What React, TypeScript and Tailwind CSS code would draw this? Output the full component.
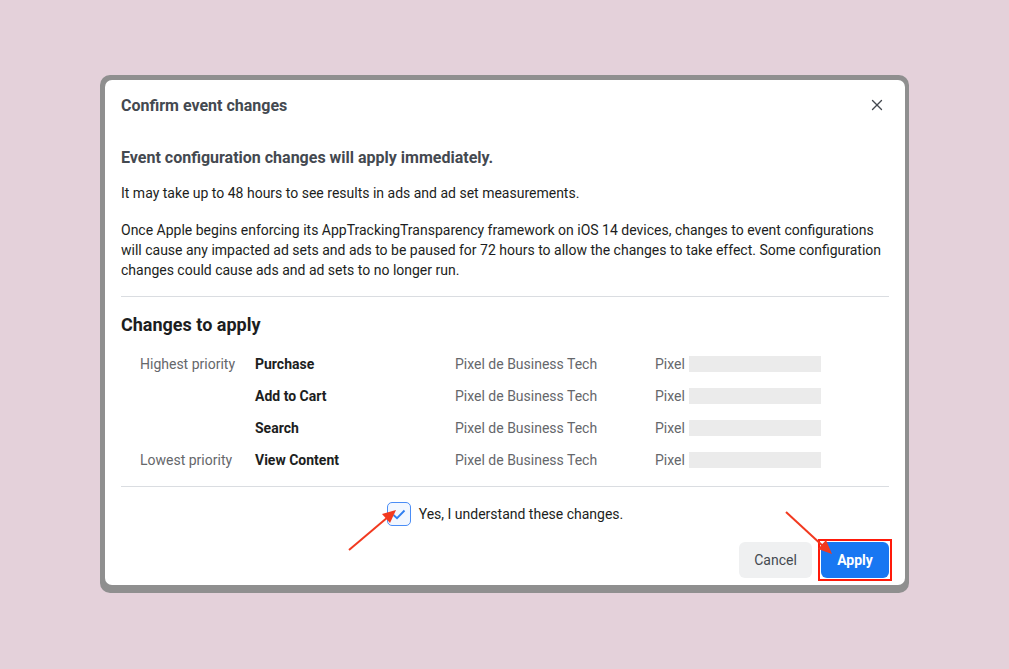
import { X } from "lucide-react";

const rows = [
  { label: "Highest priority", event: "Purchase" },
  { label: "", event: "Add to Cart" },
  { label: "", event: "Search" },
  { label: "Lowest priority", event: "View Content" },
];

function Arrows() {
  return (
    <svg
      className="absolute left-0 top-0 pointer-events-none"
      width="1009"
      height="669"
      viewBox="0 0 1009 669"
    >
      <line x1="349" y1="550" x2="388" y2="517" stroke="#f2391f" strokeWidth="2" />
      <polygon points="396,510 382,514 390,523" fill="#f2391f" />
      <line x1="786" y1="512" x2="824" y2="547" stroke="#f2391f" strokeWidth="2" />
      <polygon points="832,554 826,540 818,549" fill="#f2391f" />
    </svg>
  );
}

export default function App() {
  return (
    <div
      className="relative h-[669px] w-full overflow-hidden bg-[#e4d1da] pt-[75px]"
      style={{ fontFamily: "Roboto, 'Liberation Sans', sans-serif" }}
    >
      <div className="ml-[100px] w-[809px] rounded-[10px] bg-[#8f8f8f] pt-[5px] pl-[5px] pr-[4px] pb-[8px]">
        <div className="relative h-[505px] rounded-[7px] bg-white">
          <header className="flex h-[50px] items-center justify-between pl-4 pr-[19px]">
            <h1 className="mt-px text-[16px] font-bold text-[#444950]">Confirm event changes</h1>
            <X className="h-[18px] w-[18px] text-[#444950]" strokeWidth={1.8} />
          </header>

          <div className="px-4">
            <p className="mt-[18px] text-[16px] font-bold leading-5 text-[#444950]">
              Event configuration changes will apply immediately.
            </p>
            <p className="mt-[15px] text-[14px] leading-5 text-[#1c1e21]">
              It may take up to 48 hours to see results in ads and ad set measurements.
            </p>
            <p className="mt-[17px] text-[14px] leading-5 text-[#1c1e21]">
              Once Apple begins enforcing its AppTrackingTransparency framework on iOS 14 devices, changes to event
              configurations will cause any impacted ad sets and ads to be paused for 72 hours to allow the changes to
              take effect. Some configuration changes could cause ads and ad sets to no longer run.
            </p>
            <div className="mt-4 h-px bg-[#dadde1]" />

            <h2 className="mt-4 text-[18px] font-bold leading-6 text-[#1c1e21]">Changes to apply</h2>
            <div className="mt-[11px] flex flex-col">
              {rows.map((r) => (
                <div key={r.event} className="flex h-8 items-center text-[14px]">
                  <span className="w-[134px] pl-[19px] text-[#65676b]">{r.label}</span>
                  <span className="w-[200px] font-bold text-[#1c1e21]">{r.event}</span>
                  <span className="w-[200px] text-[#65676b]">Pixel de Business Tech</span>
                  <span className="text-[#65676b]">Pixel</span>
                  <span className="ml-[4px] h-4 w-[132px] bg-[#ebebeb]" />
                </div>
              ))}
            </div>
            <div className="mt-[10px] h-px bg-[#dadde1]" />

            <label className="mt-[15px] flex items-center justify-center gap-2">
              <span className="flex h-6 w-6 items-center justify-center rounded-[5px] border-[1.5px] border-[#4a8df6] bg-[#f2f7ff]">
                <svg width="14" height="11" viewBox="0 0 14 11">
                  <path d="M1.5 6 L5 9.2 L12.5 1.5" fill="none" stroke="#2f7ef0" strokeWidth="1.8" />
                </svg>
              </span>
              <span className="text-[14px] text-[#1c1e21]">Yes, I understand these changes.</span>
            </label>

            <div className="mt-4 flex justify-end gap-[9px]">
              <button className="h-9 w-[73px] rounded-[6px] bg-[#eff0f1] text-[14px] text-[#444950]">Cancel</button>
              <div className="relative">
                <button className="h-9 w-[68px] rounded-[6px] bg-[#1877f2] text-[14px] font-bold text-white">
                  Apply
                </button>
                <span className="absolute -left-[3px] -top-[3px] h-[42px] w-[74px] border-2 border-[#ff1a0a]" />
              </div>
            </div>
          </div>
        </div>
      </div>
      <Arrows />
    </div>
  );
}
